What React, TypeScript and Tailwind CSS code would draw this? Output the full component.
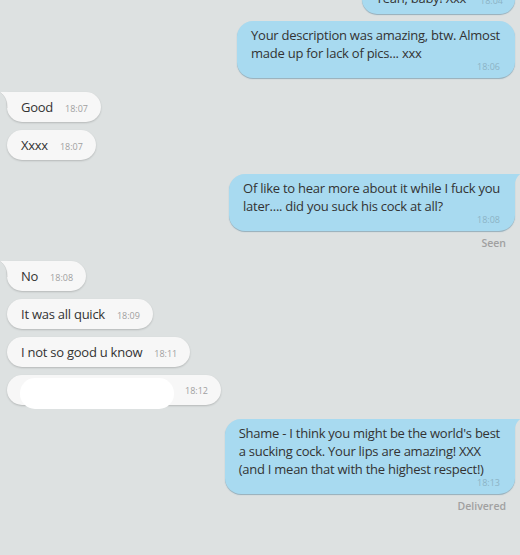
import React from "react";

const font = { fontFamily: '"Open Sans", "Noto Sans", sans-serif' };

function TailLeft() {
  return (
    <svg className="absolute left-[-8px] top-0" width="10" height="16" viewBox="0 0 10 16">
      <path d="M10 0 H0.5 C4 2 8 6 8.5 16 H10 Z" fill="#f7f7f7" />
      <path d="M0.5 0 C4 2 8 6 8.5 16" fill="none" stroke="rgba(0,0,0,0.08)" strokeWidth="1" />
    </svg>
  );
}

function TailRight() {
  return (
    <svg className="absolute right-[-6px] top-0" width="8" height="16" viewBox="0 0 8 16">
      <path d="M0 0 H7.5 C4.5 2 1.5 6 1 16 H0 Z" fill="#a8daf0" />
    </svg>
  );
}

function Left({ text, time, tail }: { text?: string; time: string; tail?: boolean }) {
  return (
    <div className="flex">
      <div
        className={`relative flex items-center h-[30px] pl-[14px] pr-[13px] bg-[#f7f7f7] rounded-[15px] shadow-[0_1px_2px_rgba(0,0,0,0.18)] ${tail ? "rounded-tl-none" : ""}`}
      >
        {tail && <TailLeft />}
        <span className="text-[13px] leading-[18px] tracking-[-0.25px] text-[#333]">{text}</span>
        <span className="ml-[12px] mt-[3px] text-[9px] text-[#a0a0a0]">{time}</span>
      </div>
    </div>
  );
}

function Right({ lines, time, tail }: { lines: string[]; time: string; tail?: boolean }) {
  return (
    <div className="flex justify-end">
      <div
        className={`relative flex flex-col pt-[5px] pb-[6px] pl-[14px] pr-[15px] bg-[#a8daf0] rounded-[16px] shadow-[0_1px_1px_rgba(60,110,140,0.45)] ${tail ? "rounded-tr-none" : ""}`}
      >
        {tail && <TailRight />}
        <div className="text-[13px] leading-[18px] tracking-[-0.25px] text-[#333]">
          {lines.map((l, i) => (
            <div key={i}>{l}</div>
          ))}
        </div>
        <div className="self-end text-[9px] leading-[10px] text-[#8cb3c5]">{time}</div>
      </div>
    </div>
  );
}

export default function App() {
  return (
    <div className="w-[520px] h-[555px] overflow-hidden bg-[#dde1e1] pl-[7px] pr-[5px]" style={font}>
      <div className="flex justify-end mt-[-16px]">
        <div className="flex items-center h-[30px] pl-[14px] pr-[12px] bg-[#a8daf0] rounded-[16px] shadow-[0_1px_1px_rgba(60,110,140,0.45)]">
          <span className="text-[13px] tracking-[-0.25px] text-[#333]">Yeah, baby! Xxx</span>
          <span className="ml-[14px] mt-[3px] text-[9px] text-[#8cb3c5]">18:04</span>
        </div>
      </div>
      <div className="mt-[7px]">
        <Right lines={["Your description was amazing, btw. Almost", "made up for lack of pics... xxx"]} time="18:06" />
      </div>
      <div className="mt-[14px] flex flex-col gap-[8px]">
        <Left text="Good" time="18:07" tail />
        <Left text="Xxxx" time="18:07" />
      </div>
      <div className="mt-[14px]">
        <Right lines={["Of like to hear more about it while I fuck you", "later.... did you suck his cock at all?"]} time="18:08" tail />
      </div>
      <div className="flex justify-end pr-[9px] mt-[5px] text-[10.5px] font-semibold text-[#a0a0a0] leading-[14px]">Seen</div>
      <div className="mt-[11px] flex flex-col gap-[8px]">
        <Left text="No" time="18:08" tail />
        <Left text="It was all quick" time="18:09" />
        <Left text="I not so good u know" time="18:11" />
        <div className="flex">
          <div className="relative flex items-center h-[30px] pl-[14px] pr-[13px] bg-[#f7f7f7] rounded-[15px] shadow-[0_1px_2px_rgba(0,0,0,0.18)]">
            <div className="absolute left-[13px] top-[3px] w-[154px] h-[31px] bg-white rounded-[15px]" />
            <span className="w-[164px]" />
            <span className="text-[9px] mt-[1px] text-[#a0a0a0]">18:12</span>
          </div>
        </div>
      </div>
      <div className="mt-[14px]">
        <Right
          lines={["Shame - I think you might be the world's best", "a sucking cock. Your lips are amazing! XXX", "(and I mean that with the highest respect!)"]}
          time="18:13"
          tail
        />
      </div>
      <div className="flex justify-end pr-[9px] mt-[5px] text-[10.5px] font-semibold text-[#a0a0a0] leading-[14px]">Delivered</div>
    </div>
  );
}
